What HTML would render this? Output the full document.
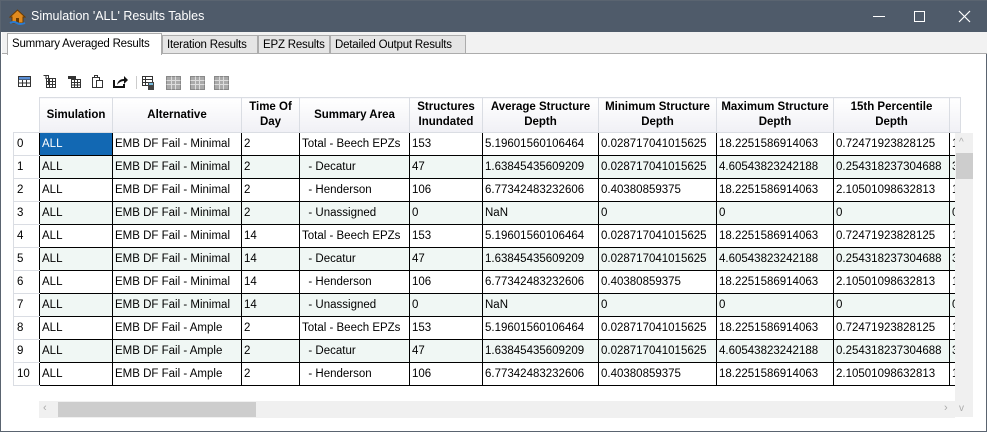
<!DOCTYPE html>
<html><head><style>
*{margin:0;padding:0;box-sizing:border-box}
body{width:987px;height:432px;overflow:hidden;background:#fff;font-family:"Liberation Sans",sans-serif;font-size:12px;position:relative}
.win{position:absolute;left:0;top:0;width:987px;height:432px;border:1px solid #5a6470;background:#fff}
.title{position:absolute;left:0;top:0;width:987px;height:31px;background:#4f5b6a;color:#fff;font-size:12.5px}
.title .t{position:absolute;left:30px;top:8px}
.tabs{position:absolute;left:1px;top:31px;width:985px;height:22px;background:#f2f2f2;border-bottom:1px solid #acacac}
.tab{position:absolute;top:3px;height:19px;border:1px solid #acacac;background:#e5e5e5;font-size:11.5px;padding:3px 0 0 4px;color:#000;white-space:nowrap;overflow:hidden;letter-spacing:-0.2px}
.tab.a{top:1px;height:22px;background:#fff;border-bottom:none;padding-top:4px}
table{position:absolute;left:12px;top:96px;border-collapse:collapse;table-layout:fixed;font-size:11.5px}
th{height:35px;background:linear-gradient(#fff,#f0f0f5);border:1px solid #dadde3;font-weight:bold;text-align:center;line-height:15px;font-size:11.5px;overflow:hidden;white-space:nowrap}
td{height:23px;border:1px solid #000;padding:0 2px;white-space:nowrap;overflow:hidden}
td.n{border:1px solid #dadde3;border-right:1px solid #000;padding-left:3px;background:#fff}
tr.o td{background:#f0f7f4}
tr.o td.n{background:#fff}
td.sel{background:#1268b3!important;color:#fff}
th.c0{border:none;background:#fff}
</style></head><body>
<div class="win">
<div class="title">
<svg style="position:absolute;left:8px;top:7px" width="17" height="17" viewBox="0 0 17 17"><path d="M1 9 L8.5 2 L16 9 L14 9 L14 15 L3 15 L3 9Z" fill="#e08a1e" stroke="#6a3a00" stroke-width="1"/><rect x="7" y="10" width="3" height="5" fill="#6a3a00"/><path d="M1 15 Q5 13 8 15 T16 15" stroke="#2a7ad0" stroke-width="2" fill="none"/></svg>
<span class="t">Simulation 'ALL' Results Tables</span>
<div style="position:absolute;left:872px;top:15px;width:12px;height:1px;background:#fff"></div>
<div style="position:absolute;left:913px;top:10px;width:11px;height:11px;border:1px solid #fff"></div>
<svg style="position:absolute;left:957px;top:9px" width="13" height="13"><path d="M1 1L12 12M12 1L1 12" stroke="#fff" stroke-width="1.2"/></svg>
</div>
<div class="tabs">
<div class="tab a" style="left:5px;width:155px">Summary Averaged Results</div>
<div class="tab" style="left:160px;width:96px">Iteration Results</div>
<div class="tab" style="left:256px;width:72px">EPZ Results</div>
<div class="tab" style="left:328px;width:136px">Detailed Output Results</div>
</div>
<svg style="position:absolute;left:16px;top:72px" width="220" height="18">
<g fill="none" stroke="#333"><rect x="1.5" y="3.5" width="12" height="10"/><path d="M1.5 6.5h12M1.5 10h12M5.5 3.5v10M9.5 3.5v10"/></g>
<rect x="2" y="4" width="11" height="2.5" fill="#5b8fd6"/>
<g fill="none" stroke="#333"><path d="M26.5 2.5h5v9M29 2v4"/><rect x="29.5" y="5.5" width="9" height="9"/><path d="M29.5 8.5h9M29.5 11.5h9M32.5 5.5v9M35.5 5.5v9"/></g>
<g fill="none" stroke="#333"><path d="M51.5 3.5h7v3"/><rect x="54.5" y="6.5" width="9" height="8"/><path d="M54.5 9.5h9M54.5 12h9M57.5 6.5v8M60.5 6.5v8"/></g>
<rect x="51" y="3" width="8" height="3" fill="#333"/>
<g fill="none" stroke="#333"><rect x="75.5" y="4.5" width="7" height="10"/><rect x="79.5" y="7.5" width="6" height="7" fill="#fff"/><path d="M77.5 4.5v-2h3v2"/></g>
<path d="M97 7v7h10v-3" stroke="#111" stroke-width="2" fill="none"/><path d="M100 12q1-6 7-6v-3l4 4-4 4v-3q-4 0-7 4z" fill="#111"/>
<path d="M119.5 3v13" stroke="#ccc"/>
<g fill="none" stroke="#333"><rect x="125.5" y="3.5" width="10" height="9"/><path d="M125.5 6.5h10M125.5 9.5h10M128.5 3.5v9"/></g><rect x="131" y="9" width="6" height="8" fill="#444"/><rect x="132" y="10" width="4" height="2" fill="#7bd"/>
<g fill="#aaa" stroke="#888"><rect x="149.5" y="3.5" width="14" height="13"/><rect x="173.5" y="3.5" width="14" height="13"/><rect x="197.5" y="3.5" width="14" height="13"/></g>
<g stroke="#ddd"><path d="M149.5 7.5h14M149.5 11.5h14M154.5 3.5v13M158.5 3.5v13M173.5 7.5h14M173.5 11.5h14M178.5 3.5v13M182.5 3.5v13M197.5 7.5h14M197.5 11.5h14M202.5 3.5v13M206.5 3.5v13"/></g>
</svg>
<table>
<colgroup><col style="width:26px"><col style="width:73px"><col style="width:129px"><col style="width:58px"><col style="width:110px"><col style="width:73px"><col style="width:116px"><col style="width:118px"><col style="width:117px"><col style="width:116px"><col style="width:8px"></colgroup>
<tr><th class="c0"></th><th>Simulation</th><th>Alternative</th><th>Time Of<br>Day</th><th>Summary Area</th><th>Structures<br>Inundated</th><th>Average Structure<br>Depth</th><th>Minimum Structure<br>Depth</th><th>Maximum Structure<br>Depth</th><th>15th Percentile<br>Depth</th><th></th></tr>
<tr><td class="n">0</td><td class="sel">ALL</td><td>EMB DF Fail - Minimal</td><td>2</td><td>Total - Beech EPZs</td><td>153</td><td>5.19601560106464</td><td>0.028717041015625</td><td>18.2251586914063</td><td>0.72471923828125</td><td>1</td></tr>
<tr class="o"><td class="n">1</td><td>ALL</td><td>EMB DF Fail - Minimal</td><td>2</td><td>&nbsp; - Decatur</td><td>47</td><td>1.63845435609209</td><td>0.028717041015625</td><td>4.60543823242188</td><td>0.254318237304688</td><td>3</td></tr>
<tr><td class="n">2</td><td>ALL</td><td>EMB DF Fail - Minimal</td><td>2</td><td>&nbsp; - Henderson</td><td>106</td><td>6.77342483232606</td><td>0.40380859375</td><td>18.2251586914063</td><td>2.10501098632813</td><td>1</td></tr>
<tr class="o"><td class="n">3</td><td>ALL</td><td>EMB DF Fail - Minimal</td><td>2</td><td>&nbsp; - Unassigned</td><td>0</td><td>NaN</td><td>0</td><td>0</td><td>0</td><td>0</td></tr>
<tr><td class="n">4</td><td>ALL</td><td>EMB DF Fail - Minimal</td><td>14</td><td>Total - Beech EPZs</td><td>153</td><td>5.19601560106464</td><td>0.028717041015625</td><td>18.2251586914063</td><td>0.72471923828125</td><td>1</td></tr>
<tr class="o"><td class="n">5</td><td>ALL</td><td>EMB DF Fail - Minimal</td><td>14</td><td>&nbsp; - Decatur</td><td>47</td><td>1.63845435609209</td><td>0.028717041015625</td><td>4.60543823242188</td><td>0.254318237304688</td><td>3</td></tr>
<tr><td class="n">6</td><td>ALL</td><td>EMB DF Fail - Minimal</td><td>14</td><td>&nbsp; - Henderson</td><td>106</td><td>6.77342483232606</td><td>0.40380859375</td><td>18.2251586914063</td><td>2.10501098632813</td><td>1</td></tr>
<tr class="o"><td class="n">7</td><td>ALL</td><td>EMB DF Fail - Minimal</td><td>14</td><td>&nbsp; - Unassigned</td><td>0</td><td>NaN</td><td>0</td><td>0</td><td>0</td><td>0</td></tr>
<tr><td class="n">8</td><td>ALL</td><td>EMB DF Fail - Ample</td><td>2</td><td>Total - Beech EPZs</td><td>153</td><td>5.19601560106464</td><td>0.028717041015625</td><td>18.2251586914063</td><td>0.72471923828125</td><td>1</td></tr>
<tr class="o"><td class="n">9</td><td>ALL</td><td>EMB DF Fail - Ample</td><td>2</td><td>&nbsp; - Decatur</td><td>47</td><td>1.63845435609209</td><td>0.028717041015625</td><td>4.60543823242188</td><td>0.254318237304688</td><td>3</td></tr>
<tr><td class="n">10</td><td>ALL</td><td>EMB DF Fail - Ample</td><td>2</td><td>&nbsp; - Henderson</td><td>106</td><td>6.77342483232606</td><td>0.40380859375</td><td>18.2251586914063</td><td>2.10501098632813</td><td>1</td></tr>
</table>
<div style="position:absolute;left:954px;top:132px;width:18px;height:284px;background:#f0f0f0"></div>
<div style="position:absolute;left:955px;top:152px;width:17px;height:26px;background:#cdcdcd"></div>
<div style="position:absolute;left:958px;top:136px;color:#aaa;font-size:10px">^</div>
<div style="position:absolute;left:958px;top:402px;color:#aaa;font-size:10px">v</div>
<div style="position:absolute;left:38px;top:400px;width:916px;height:17px;background:#f0f0f0"></div>
<div style="position:absolute;left:57px;top:401px;width:198px;height:15px;background:#cdcdcd"></div>
<div style="position:absolute;left:42px;top:401px;color:#aaa;font-size:11px">‹</div>
<div style="position:absolute;left:943px;top:401px;color:#aaa;font-size:11px">›</div>
</div>
</body></html>
